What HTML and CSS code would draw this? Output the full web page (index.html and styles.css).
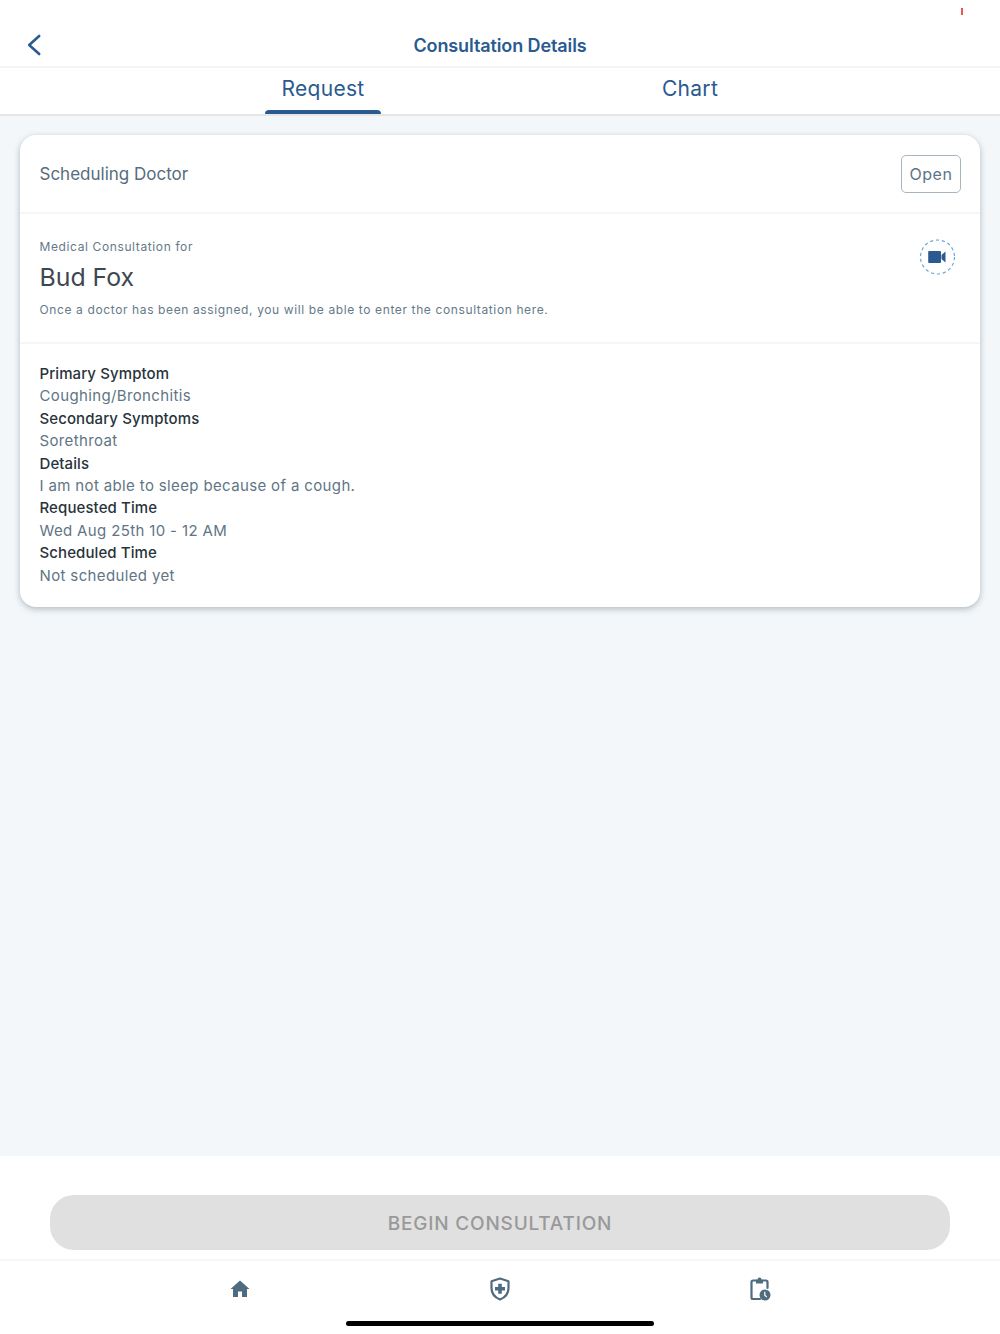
FILE: index.html
```html
<!DOCTYPE html>
<html lang="en">
<head>
<meta charset="utf-8">
<title>Consultation Details</title>
<link rel="stylesheet" href="styles.css">
</head>
<body>
<div class="app">
  <span class="status-mark"></span>
  <header class="header">
    <svg class="back" width="16" height="22" viewBox="0 0 16 22"><path d="M13.200 2 L3.200 11 L13.200 20" fill="none" stroke="#2a5a8f" stroke-width="2.600" stroke-linecap="round" stroke-linejoin="round"/></svg>
    <h1 class="title">Consultation Details</h1>
  </header>
  <nav class="tabs">
    <div class="tab tab-active">Request<span class="tab-bar"></span></div>
    <div class="tab">Chart</div>
  </nav>
  <main class="content">
    <section class="card">
      <div class="card-top">
        <span class="doctor">Scheduling Doctor</span>
        <span class="status">Open</span>
      </div>
      <div class="card-patient">
        <div class="patient-text">
          <div class="small">Medical Consultation for</div>
          <div class="name">Bud Fox</div>
          <div class="small note">Once a doctor has been assigned, you will be able to enter the consultation here.</div>
        </div>
        <div class="video">
          <svg width="36" height="36" viewBox="0 0 36 36">
            <circle cx="18.500" cy="18" r="17" fill="none" stroke="#69a8de" stroke-width="1.200" stroke-dasharray="3.200 2.800"/>
            <path d="M10.200 12 H21 A1 1 0 0 1 22 13 V23 A1 1 0 0 1 21 24 H10.200 A1 1 0 0 1 9.200 23 V13 A1 1 0 0 1 10.200 12z M22.500 16 L26.500 12.500 V23.500 L22.500 20z" fill="#2a5a8f"/>
          </svg>
        </div>
      </div>
      <dl class="details">
        <dt>Primary Symptom</dt><dd>Coughing/Bronchitis</dd>
        <dt>Secondary Symptoms</dt><dd>Sorethroat</dd>
        <dt>Details</dt><dd>I am not able to sleep because of a cough.</dd>
        <dt>Requested Time</dt><dd>Wed Aug 25th 10 - 12 AM</dd>
        <dt>Scheduled Time</dt><dd>Not scheduled yet</dd>
      </dl>
    </section>
  </main>
  <div class="action">
    <div class="begin">BEGIN CONSULTATION</div>
  </div>
  <footer class="nav">
    <div class="nav-icons">
      <svg width="20" height="18" viewBox="0 0 20 18"><path d="M10 .5 L19.500 9 H17 V17 H12 V11.500 H8 V17 H3 V9 H.5z" fill="#4f6b7f"/></svg>
      <svg width="20" height="24" viewBox="0 0 20 24"><path d="M10 1.500 L18.500 4.200 V11 C18.500 16.500 15 20.500 10 22.500 C5 20.500 1.500 16.500 1.500 11 V4.200z" fill="none" stroke="#4f6b7f" stroke-width="2.200" stroke-linejoin="round"/><path d="M8.200 6.800h3.600v3.200h3.200v3.600h-3.200v3.200h-3.600v-3.200h-3.200v-3.600h3.200z" fill="#4f6b7f"/></svg>
      <svg width="22" height="24" viewBox="0 0 22 24"><path d="M6 3.500 H3 A1.500 1.500 0 0 0 1.500 5 V20.500 A1.500 1.500 0 0 0 3 22 H10 M13 3.500 H16 A1.500 1.500 0 0 1 17.500 5 V11" fill="none" stroke="#4f6b7f" stroke-width="2.200" stroke-linecap="round"/><path d="M6 2.500 H7.500 A2 2 0 0 1 11.500 2.500 H13 V6.500 H6z" fill="#4f6b7f"/><circle cx="15" cy="18" r="5.500" fill="#4f6b7f"/><path d="M14.800 14.800 V18.200 L16.800 20.200" fill="none" stroke="#fff" stroke-width="1.200"/></svg>
    </div>
    <div class="home-indicator"></div>
  </footer>
</div>
</body>
</html>
```
FILE: styles.css
```css
* { box-sizing: border-box; margin: 0; padding: 0; }
html, body { height: 100%; }
body { font-family: Inter, "Liberation Sans", sans-serif; background: #fff; overflow: hidden; }
.app { position: relative; width: 1000px; height: 1334px; display: flex; flex-direction: column; }
.status-mark { position: absolute; left: 961px; top: 8px; width: 2px; height: 7px; background: #ee5548; }

.header { position: relative; height: 68px; flex: none; border-bottom: 2px solid #f4f4f4; display: flex; align-items: flex-end; justify-content: center; padding-bottom: 8px; }
.back { position: absolute; left: 26px; top: 34px; }
.title { font-size: 18px; line-height: 24px; font-weight: 600; color: #2a5a8f; letter-spacing: -0.1px; }

.tabs { height: 48px; flex: none; display: grid; grid-template-columns: 265px 116px 251px 116px; border-bottom: 2px solid #e4e6e7; }
.tab { position: relative; grid-column: 4; font-size: 21px; line-height: 42px; letter-spacing: 0.3px; color: #2a5a8f; text-align: center; }
.tab-active { grid-column: 2; }
.tab-bar { position: absolute; left: 0; right: 0; bottom: 0; height: 4px; background: #2a5a8f; border-radius: 6px 6px 0 0; }

.content { flex: 1; background: #f3f7fa; padding: 19px 20px 0; }
.card { background: #fff; border-radius: 16px; height: 472px; box-shadow: 0 2px 6px rgba(60, 75, 90, 0.36); }
.card-top { height: 79px; padding: 0 19px 0 19.5px; display: flex; align-items: center; justify-content: space-between; border-bottom: 2px solid #f4f7fa; }
.doctor { font-size: 17px; color: #566d7d; }
.status { width: 60px; height: 38px; border: 1px solid #a9b5bf; border-radius: 5px; font-size: 16px; letter-spacing: 0.6px; color: #5d7587; display: flex; align-items: center; justify-content: center; }
.card-patient { height: 130px; padding: 0 25px 0 19.5px; border-bottom: 2px solid #f4f7fa; display: flex; justify-content: space-between; }
.patient-text { padding-top: 25px; }
.small { font-size: 12px; line-height: 16px; letter-spacing: 0.62px; color: #647a89; }
.name { font-size: 24.800px; line-height: 32px; color: #3d474f; margin-top: 6px; margin-bottom: 9px; }
.video { width: 36px; height: 36px; margin-top: 25px; }
.details { padding: 19px 19.5px 0; font-size: 15px; line-height: 22.4px; }
.details dt { color: #29333b; font-weight: 500; letter-spacing: 0.1px; }
.details dd { color: #5f7585; letter-spacing: 0.36px; }

.action { height: 103px; flex: none; padding: 39px 50px 0; }
.begin { height: 55px; background: #e0e0e0; border-radius: 24px; text-align: center; font-size: 19px; font-weight: 500; line-height: 57px; letter-spacing: 0.8px; color: #999; }

.nav { height: 75px; flex: none; border-top: 2px solid #f6f6f6; position: relative; }
.nav-icons { display: grid; grid-template-columns: 480px 40px 480px; align-items: center; height: 56px; justify-items: center; }
.nav-icons svg:first-child { justify-self: end; margin-right: 230px; grid-column: 1; }
.nav-icons svg:nth-child(2) { grid-column: 2; }
.nav-icons svg:nth-child(3) { grid-column: 3; justify-self: start; margin-left: 230px; }
.home-indicator { position: absolute; left: 346px; bottom: 8px; width: 308px; height: 5px; border-radius: 3px; background: #000; }
```
